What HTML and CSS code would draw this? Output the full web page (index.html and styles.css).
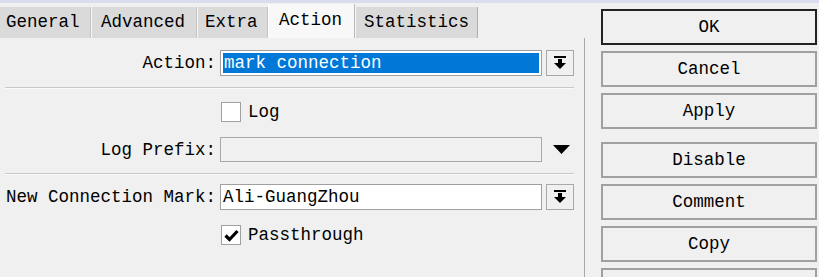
FILE: index.html
```html
<!DOCTYPE html>
<html>
<head>
<meta charset="utf-8">
<link rel="stylesheet" href="styles.css">
</head>
<body>
<div class="topstrip"></div>
<div class="window">
  <div class="left">
    <div class="tabs">
      <div class="tab">General</div>
      <div class="tab">Advanced</div>
      <div class="tab">Extra</div>
      <div class="tab active">Action</div>
      <div class="tab">Statistics</div>
    </div>
    <div class="panel">
      <div class="form">
        <div class="label">Action:</div>
        <div class="field selected"><span class="sel">mark connection</span></div>
        <div class="dd">
          <svg width="12" height="14" viewBox="0 0 12 14"><rect x="0" y="0" width="12" height="2" fill="#000"/><rect x="4" y="3" width="4" height="4" fill="#000"/><polygon points="0,7 12,7 6,13" fill="#000"/></svg>
        </div>

        <div class="sep sep1"></div>

        <div class="check-row row-log">
          <span class="box"></span><span class="cklabel">Log</span>
        </div>

        <div class="label">Log Prefix:</div>
        <div class="field disabled"></div>
        <div class="tri">
          <svg width="17" height="10" viewBox="0 0 17 10"><polygon points="0,0 17,0 8.5,9" fill="#000"/></svg>
        </div>

        <div class="sep sep2"></div>

        <div class="label">New Connection Mark:</div>
        <div class="field">Ali-GuangZhou</div>
        <div class="dd">
          <svg width="12" height="14" viewBox="0 0 12 14"><rect x="0" y="0" width="12" height="2" fill="#000"/><rect x="4" y="3" width="4" height="4" fill="#000"/><polygon points="0,7 12,7 6,13" fill="#000"/></svg>
        </div>

        <div class="check-row row-pass">
          <span class="box checked">
            <svg width="15" height="13" viewBox="0 0 15 13"><polyline points="1.5,6.5 5.5,10.5 13.5,2" fill="none" stroke="#000" stroke-width="3.2"/></svg>
          </span><span class="cklabel">Passthrough</span>
        </div>
      </div>
    </div>
  </div>
  <div class="buttons">
    <div class="btn default">OK</div>
    <div class="btn">Cancel</div>
    <div class="btn">Apply</div>
    <div class="btn spaced">Disable</div>
    <div class="btn">Comment</div>
    <div class="btn">Copy</div>
    <div class="btn"></div>
  </div>
</div>
</body>
</html>
```
FILE: styles.css
```css
html, body {
  margin: 0;
  padding: 0;
  background: #f0f0f0;
  overflow: hidden;
  width: 819px;
  height: 277px;
}
body {
  font-family: "Liberation Mono", monospace;
  font-size: 17.5px;
  color: #000;
}
.topstrip {
  height: 3px;
  background: #dcdcf0;
}
.window {
  display: flex;
  height: 274px;
}
.left {
  width: 585px;
  display: flex;
  flex-direction: column;
}
.tabs {
  display: flex;
  align-items: flex-end;
  height: 35px;
  padding-left: 0;
}
.tab {
  height: 31px;
  line-height: 31px;
  background: #dadada;
  padding: 0 10px 0 6px;
  border-right: 1px solid #c4c4c4;
  border-left: 1px solid #f6f6f6;
  box-sizing: border-box;
}
.tab:nth-child(1) { width: 91px; border-left: none; }
.tab:nth-child(2) { width: 106px; padding-left: 9px; }
.tab:nth-child(3) { width: 71px; padding-left: 7px; }
.tab.active {
  width: 87px;
  height: 34px;
  line-height: 32px;
  background: #f8f8f8;
  padding-left: 10px;
  border-left: 1px solid #ffffff;
  border-right: 1px solid #b8b8b8;
}
.tab:nth-child(5) { width: 123px; padding-left: 8px; border-right: 1px solid #b0b0b0; }
.panel {
  flex: 1;
  border-right: 1px solid #a8a8a8;
  padding-top: 12px;
}
.form {
  display: grid;
  grid-template-columns: 216px 322px 28px;
  column-gap: 4px;
  align-items: center;
  width: 578px;
}
.label {
  text-align: right;
  white-space: nowrap;
}
.field {
  height: 26px;
  box-sizing: border-box;
  border: 1px solid #a0a0a0;
  background: #fff;
  padding: 2px 2px;
  line-height: 20px;
  white-space: nowrap;
}
.sel {
  display: block;
  background: #0078d7;
  color: #fff;
  height: 20px;
  line-height: 20px;
  padding-left: 1px;
}
.field.disabled {
  background: #f0f0f0;
  border-color: #a8a8a8;
  height: 25px;
}
.dd {
  height: 26px;
  box-sizing: border-box;
  border: 1px solid #a8a8a8;
  background: #f0f0f0;
  display: flex;
  align-items: center;
  justify-content: center;
}
.tri {
  display: flex;
  justify-content: center;
  align-items: center;
  padding-left: 3px;
  height: 25px;
}
.sep {
  grid-column: 1 / 4;
  height: 1px;
  background: #c8c8c8;
  border-bottom: 1px solid #fafafa;
  margin-left: 5px;
}
.sep1 { margin-top: 11px; margin-bottom: 13px; }
.sep2 { margin-top: 11px; margin-bottom: 9px; }
.check-row {
  grid-column: 2 / 4;
  display: flex;
  align-items: center;
  height: 20px;
}
.row-log { margin-bottom: 15px; }
.row-pass { margin-top: 15px; }
.box {
  width: 20px;
  height: 20px;
  box-sizing: border-box;
  border: 1px solid #a0a0a0;
  background: #fff;
  display: flex;
  align-items: center;
  justify-content: center;
  margin-left: 1px;
}
.cklabel {
  margin-left: 7px;
  line-height: 20px;
}
.buttons {
  display: flex;
  flex-direction: column;
  gap: 6px;
  margin-left: 16px;
  padding-top: 6px;
  width: 216px;
}
.btn {
  flex: none;
  height: 36px;
  box-sizing: border-box;
  border: 2px solid #a0a0a0;
  background: #f0f0f0;
  text-align: center;
  line-height: 32px;
}
.btn.default {
  border-color: #222;
}
.btn.spaced {
  margin-top: 7px;
}
```
